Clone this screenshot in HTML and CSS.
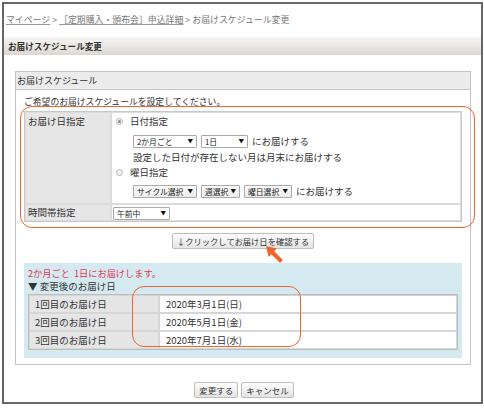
FILE: index.html
```html
<!DOCTYPE html>
<html lang="ja">
<head>
<meta charset="utf-8">
<title>お届けスケジュール変更</title>
<link rel="stylesheet" href="styles.css">
</head>
<body>
<div class="frame">
  <div class="crumbs"><a href="#">マイページ</a> &gt; <a href="#">［定期購入・頒布会］申込詳細</a> &gt; お届けスケジュール変更</div>
  <div class="titlebar">お届けスケジュール変更</div>
  <div class="section">
    <div class="sec-head">お届けスケジュール</div>
    <div class="sec-body">
      <p class="lead">ご希望のお届けスケジュールを設定してください。</p>
      <table class="form">
        <tr class="row-date">
          <th>お届け日指定</th>
          <td>
            <div class="opt"><span class="radio checked"></span>日付指定</div>
            <div class="sub sels1">
              <span class="sel w64">2か月ごと<i>▼</i></span>
              <span class="sel w47">1日<i>▼</i></span>
              <span class="txt">にお届けする</span>
            </div>
            <div class="sub note">設定した日付が存在しない月は月末にお届けする</div>
            <div class="opt"><span class="radio"></span>曜日指定</div>
            <div class="sub sels2">
              <span class="sel gray w64">サイクル選択<i>▼</i></span>
              <span class="sel gray w39">週選択<i>▼</i></span>
              <span class="sel gray w48">曜日選択<i>▼</i></span>
              <span class="txt">にお届けする</span>
            </div>
          </td>
        </tr>
        <tr class="row-time">
          <th>時間帯指定</th>
          <td><span class="sel w57 tsel">午前中<i>▼</i></span></td>
        </tr>
      </table>
      <div class="confirm"><button class="btn wide">↓クリックしてお届け日を確認する</button></div>
      <div class="result">
        <p class="msg">2か月ごと&nbsp; 1日にお届けします。</p>
        <p class="after">▼ 変更後のお届け日</p>
        <table class="dates">
          <tr><th>1回目のお届け日</th><td>2020年3月1日(日)</td></tr>
          <tr><th>2回目のお届け日</th><td>2020年5月1日(金)</td></tr>
          <tr><th>3回目のお届け日</th><td>2020年7月1日(水)</td></tr>
        </table>
      </div>
    </div>
  </div>
  <div class="actions">
    <button class="btn">変更する</button>
    <button class="btn">キャンセル</button>
  </div>

  <div class="mark mark-form"></div>
  <div class="mark mark-dates"></div>
  <svg class="pointer" width="20" height="20" viewBox="0 0 20 20" aria-hidden="true">
    <polygon points="2,2 13,4.5 4.5,13" fill="#f0652a"/>
    <line x1="7" y1="7" x2="17.5" y2="17.5" stroke="#f0652a" stroke-width="4" stroke-linecap="butt"/>
  </svg>
</div>
</body>
</html>
```
FILE: styles.css
```css
html, body {
  margin: 0;
  padding: 0;
  background: #fff;
}
body {
  font-family: "Noto Sans CJK JP", "Noto Sans", sans-serif;
  font-size: 9.5px;
  color: #333;
  width: 484px;
  height: 409px;
  overflow: hidden;
}
p { margin: 0; }

.frame {
  position: relative;
  box-sizing: border-box;
  margin: 2px 0 0 2px;
  width: 481px;
  height: 402px;
  border: 2px solid #666;
}

.crumbs {
  box-sizing: border-box;
  height: 33px;
  padding: 9px 0 0 2px;
  line-height: 14px;
  font-size: 8.9px;
  color: #777;
  white-space: nowrap;
}
.crumbs a {
  color: #777;
  text-decoration: underline;
  text-decoration-color: #999;
}

.titlebar {
  height: 18px;
  line-height: 18px;
  padding-left: 4px;
  font-size: 8.6px;
  font-weight: bold;
  color: #333;
  background: linear-gradient(#f7f6f4, #ece9e6 45%, #dcd7d1);
}

.section {
  margin: 16px 10px 0 11px;
  border: 1px solid #c4c4c4;
}
.sec-head {
  height: 17px;
  line-height: 17px;
  padding-left: 1px;
  background: #ebebeb;
  border-bottom: 1px solid #c8c8c8;
  color: #333;
  font-size: 9px;
}
.sec-body {
  padding: 0 8px 6px 8px;
}
.lead {
  margin-top: 5px;
  line-height: 14px;
  height: 16px;
  font-size: 8.8px;
}

.form {
  width: 100%;
  border-collapse: separate;
  border-spacing: 0;
  border: 1px solid #c8c8c8;
}
.form th, .form td {
  border: 1px solid #dcdcdc;
  padding: 0;
}
.form th {
  width: 80px;
  background: #e6e6e6;
  font-weight: normal;
  text-align: left;
  vertical-align: top;
  padding: 1px 2px;
  line-height: 14px;
}
.form td {
  vertical-align: top;
  padding-left: 4px;
}
.row-date td { height: 90px; }
.row-time td { height: 15px; vertical-align: middle; padding-left: 1px; }
.row-time th { line-height: 13px; }

.opt {
  display: flex;
  align-items: center;
  height: 16px;
  gap: 7px;
}
.radio {
  box-sizing: border-box;
  width: 7px;
  height: 7px;
  border-radius: 50%;
  border: 1px solid #b5b5b5;
  background: #f2f2f2;
  position: relative;
}
.radio.checked::after {
  content: "";
  position: absolute;
  left: 1px;
  top: 1px;
  width: 3px;
  height: 3px;
  border-radius: 50%;
  background: #8a8a8a;
}
.sub {
  margin-left: 17px;
}
.sels1 { margin-top: 6px; display: flex; gap: 4px; align-items: center; }
.note { margin-top: 2px; line-height: 14px; }
.sels2 { margin-top: 5px; display: flex; gap: 4px; align-items: center; }
.txt { line-height: 13px; }

.sel {
  box-sizing: border-box;
  display: inline-flex;
  align-items: center;
  justify-content: space-between;
  height: 13px;
  border: 1px solid #a9a9a9;
  border-radius: 1px;
  background: #fff;
  padding: 0 3px 0 3px;
  font-size: 7.8px;
  line-height: 11px;
  color: #222;
  white-space: nowrap;
}
.sel i {
  font-style: normal;
  font-size: 5.5px;
  color: #111;
}
.sel.gray { background: linear-gradient(#fbfbfb, #ececec); }
.w64 { width: 64px; }
.w47 { width: 47px; }
.w39 { width: 39px; }
.w48 { width: 48px; }
.w57 { width: 57px; }

.confirm {
  display: flex;
  justify-content: center;
  margin-top: 11px;
}
.btn {
  box-sizing: border-box;
  height: 16px;
  padding: 0 4px;
  font-family: "Noto Sans CJK JP", "Noto Sans", sans-serif;
  font-size: 8.5px;
  line-height: 14px;
  color: #333;
  border: 1px solid #bdbdbd;
  border-radius: 2px;
  background: linear-gradient(#fdfdfd, #e4e4e4);
  white-space: nowrap;
}
.btn.wide { padding: 0 4px; font-size: 8.3px; }

.result {
  margin-top: 14px;
  background: #d5e9f1;
  padding: 3px 4px 8px 4px;
}
.msg {
  color: #e33a52;
  line-height: 14px;
  font-size: 9.2px;
}
.after {
  line-height: 13px;
  height: 14px;
}
.dates {
  width: 100%;
  border-collapse: separate;
  border-spacing: 0;
  border: 1px solid #bdbdbd;
  background: #fff;
}
.dates th, .dates td {
  height: 16px;
  padding: 0;
  border: 1px solid #d6d6d6;
  line-height: 16px;
}
.dates th {
  width: 123px;
  background: #e5e5e5;
  font-weight: normal;
  text-align: left;
  padding-left: 5px;
}
.dates td {
  padding-left: 6px;
}

.actions {
  display: flex;
  justify-content: center;
  gap: 3px;
  margin-top: 17px;
  padding-left: 3px;
}

.mark {
  position: absolute;
  box-sizing: border-box;
  border: 1.5px solid #ee6530;
  border-radius: 12px;
  pointer-events: none;
}
.mark-form {
  left: 16px;
  top: 102px;
  width: 455px;
  height: 122px;
}
.mark-dates {
  left: 128px;
  top: 282px;
  width: 169px;
  height: 61px;
}
.pointer {
  position: absolute;
  left: 260px;
  top: 240px;
}
```
